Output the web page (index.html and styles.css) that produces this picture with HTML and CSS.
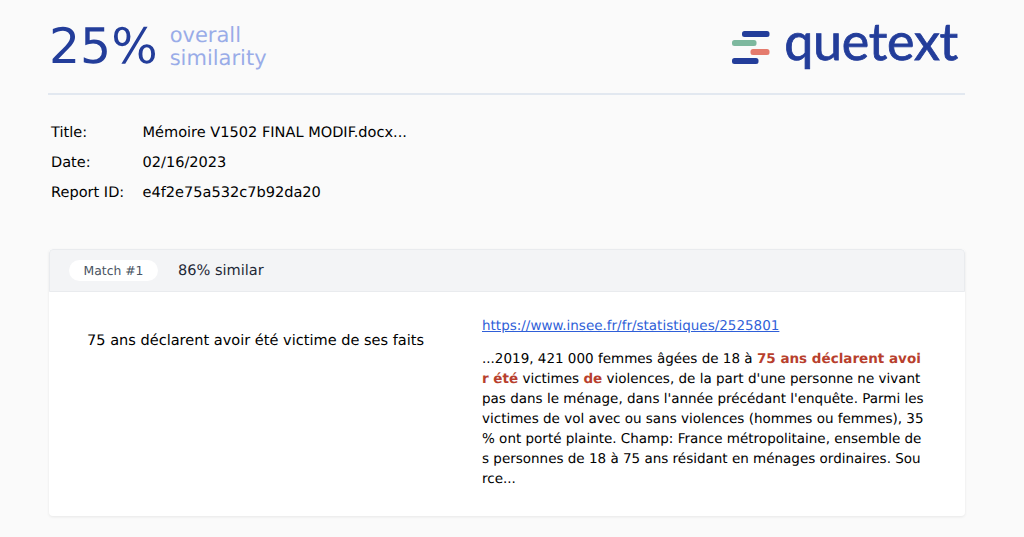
FILE: index.html
```html
<!DOCTYPE html>
<html lang="fr">
<head>
<meta charset="utf-8">
<title>Quetext report</title>
<link rel="stylesheet" href="styles.css">
</head>
<body>
<main class="page">
  <header class="top">
    <div class="score">
      <span class="percent">25%</span>
      <span class="score-label">overall<br>similarity</span>
    </div>
    <div class="logo">
      <svg class="logo-mark" width="38" height="34" viewBox="0 0 38 34" aria-hidden="true">
        <rect x="10" y="0" width="27.5" height="6" rx="2.5" fill="#233d9a"/>
        <rect x="0" y="9" width="24.5" height="6" rx="2.5" fill="#7db89e"/>
        <rect x="18.5" y="18" width="19" height="6" rx="2.5" fill="#e57b6d"/>
        <rect x="0" y="27" width="26.5" height="6" rx="2.5" fill="#233d9a"/>
      </svg>
      <span class="logo-text">quetext</span>
    </div>
  </header>

  <dl class="meta">
    <div class="meta-row"><dt>Title:</dt><dd>Mémoire V1502 FINAL MODIF.docx...</dd></div>
    <div class="meta-row"><dt>Date:</dt><dd>02/16/2023</dd></div>
    <div class="meta-row"><dt>Report ID:</dt><dd>e4f2e75a532c7b92da20</dd></div>
  </dl>

  <section class="card">
    <div class="card-head">
      <span class="pill">Match #1</span>
      <span class="similar">86% similar</span>
    </div>
    <div class="card-body">
      <p class="source">75 ans déclarent avoir été victime de ses faits</p>
      <div class="match">
        <a class="link" href="#">https://www.insee.fr/fr/statistiques/2525801</a>
        <p class="excerpt">...2019, 421 000 femmes âgées de 18 à <b>75 ans déclarent avoir été</b> victimes <b>de</b> violences, de la part d'une personne ne vivant pas dans le ménage, dans l'année précédant l'enquête. Parmi les victimes de vol avec ou sans violences (hommes ou femmes), 35 % ont porté plainte. Champ: France métropolitaine, ensemble des personnes de 18 à 75 ans résidant en ménages ordinaires. Source...</p>
      </div>
    </div>
  </section>
</main>
</body>
</html>
```
FILE: styles.css
```css
* { box-sizing: border-box; }
html, body { margin: 0; padding: 0; }
body {
  background: #fafafa;
  font-family: "DejaVu Sans", sans-serif;
  color: #000;
  height: 537px;
  overflow: hidden;
  text-rendering: geometricPrecision;
}
.page { width: 917px; margin-left: 48px; }
.top {
  display: flex;
  justify-content: space-between;
  align-items: flex-start;
  height: 95px;
  border-bottom: 2px solid #e2e8f0;
  padding-top: 18px;
}
.score { display: flex; align-items: center; gap: 12px; margin-left: 1px; }
.percent { font-size: 48.9px; line-height: 58px; color: #233d9a; }
.score-label { font-size: 21px; line-height: 23px; color: #99ace8; }
.logo { display: flex; align-items: center; gap: 14px; margin-right: 7px; margin-top: 5px; }
.logo-text {
  font-family: "Lato", sans-serif;
  font-size: 52px;
  line-height: 50px;
  font-weight: 400;
  color: #233d9a;
  letter-spacing: -0.25px;
  -webkit-text-stroke: 0.8px #233d9a;
  position: relative;
  top: -7px;
}
.meta { margin: 22px 0 0 3px; font-size: 14.56px; }
.meta-row { display: flex; height: 30px; align-items: center; }
.meta dt { width: 91.5px; }
.meta dd { margin: 0; }
.card {
  margin: 42px 0 0 1px;
  background: #fff;
  border-radius: 4px;
  box-shadow: 0 1px 3px rgba(0,0,0,.08);
  overflow: hidden;
}
.card-head {
  display: flex;
  align-items: center;
  gap: 19px;
  height: 43px;
  padding-left: 19px;
  background: #f3f4f6;
  border: 1px solid #e9ebee;
  border-radius: 4px 4px 0 0;
}
.pill {
  background: #fff;
  border-radius: 11px;
  width: 89px;
  height: 21px;
  display: flex;
  align-items: center;
  justify-content: center;
  font-size: 12.4px;
  color: #4b5563;
}
.similar { font-size: 14.56px; color: #1f2937; margin-left: 1px; }
.card-body { display: flex; height: 224px; padding: 25px 0 0 38px; }
.source { margin: 13px 0 0; width: 395px; font-size: 14.56px; line-height: 21px; }
.match { width: 443px; }
.link { display: block; font-size: 13.5px; line-height: 18px; color: #2f5fd8; text-decoration: underline; }
.excerpt { margin: 14px 0 0; font-size: 13.5px; line-height: 20px; word-break: break-all; }
.excerpt b { color: #b83f2d; font-weight: 700; }
```
